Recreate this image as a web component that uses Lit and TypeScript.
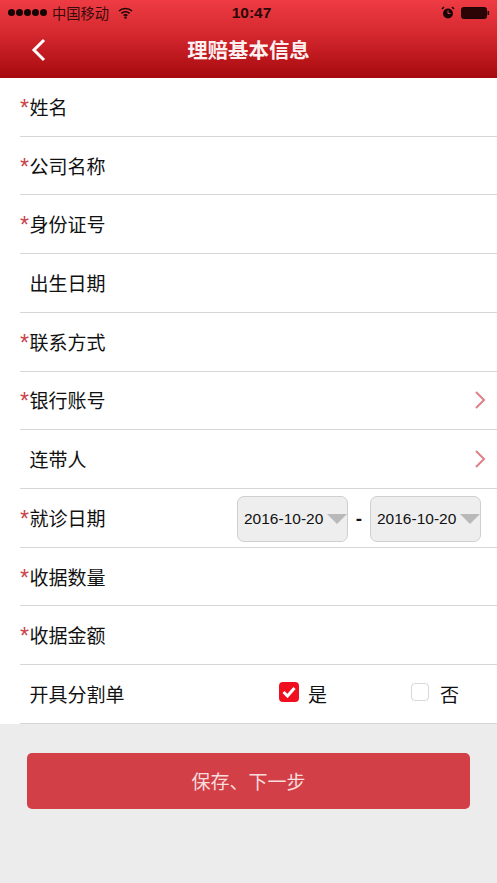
import { LitElement, html, css } from "lit";
import { customElement } from "lit/decorators.js";

const chevron = html`<svg class="chev" width="11" height="18" viewBox="0 0 11 18"><path d="M1 1 L9 9 L1 17" fill="none" stroke="#e07f87" stroke-width="2"/></svg>`;

@customElement("app-root")
export class AppRoot extends LitElement {
  static styles = css`
    :host { display: block; width: 497px; height: 883px; background: #ececec; overflow: hidden;
      font-family: "Liberation Sans", "Noto Sans CJK SC", sans-serif; color: #111; }
    .header { height: 78px; box-sizing: border-box; background: linear-gradient(#ef3c44 0%, #d4272e 45%, #a60a0e 100%);
      display: flex; flex-direction: column; }
    .status { height: 25px; display: flex; align-items: center; padding: 0 7px 0 8px; font-size: 14px; color: #1a0606; }
    .dots { display: flex; gap: 1px; margin-right: 5px; }
    .dots i { width: 7px; height: 7px; border-radius: 50%; background: #160404; }
    .carrier { font-size: 14.25px; color: #3a0c0c; }
    .wifi { margin-left: 9px; }
    .time { position: absolute; left: 0; width: 503px; text-align: center; font-size: 15.5px; font-weight: 700; pointer-events: none; color: #2a0808; }
    .sright { margin-left: auto; display: flex; align-items: center; gap: 6px; }
    .nav { flex: 1; display: flex; align-items: center; justify-content: center; position: relative; padding-bottom: 5px; }
    .back { position: absolute; left: 31px; top: 13px; }
    .title { color: #fdf0f0; font-size: 20.4px; font-weight: 700; }
    .form { background: #fff; padding-left: 20px; }
    .row { height: 58.73px; box-sizing: border-box; border-bottom: 1.5px solid #d6d6d6; display: flex; align-items: center;
      font-size: 19px; padding-right: 11px; padding-bottom: 1px; }
    .mark { width: 10px; color: #c9434c; font-size: 23px; line-height: 1; height: 19px; position: relative; top: 0; margin-right: -0.5px; }
    .spacer { flex: 1; }
    .dates { display: flex; align-items: center; margin: 3px 5px 0 0; }
    .select { width: 111px; height: 46px; box-sizing: border-box; border: 1px solid #cfcfcf; border-radius: 7px; background: #eeeeee;
      display: flex; align-items: center; padding-left: 6px; font-size: 15.5px; color: #111; position: relative; }
    .tri { position: absolute; right: 0; top: 17px; width: 0; height: 0; border-left: 10px solid transparent; border-right: 10px solid transparent; border-top: 10px solid #b9b9b9; }
    .dash { width: 22px; text-align: center; font-size: 19px; font-weight: 700; }
    .opt { display: flex; align-items: center; gap: 9px; font-size: 19px; }
    .opts { display: flex; gap: 84px; margin-right: 27px; }
    .opt:last-child { gap: 11px; }
    .box { width: 20px; height: 20px; box-sizing: border-box; border-radius: 4px; display: flex; align-items: center; justify-content: center; position: relative; top: -2px; }
    .on { background: #ef0f1e; }
    .off { background: #fff; border: 1.5px solid #d8d8d8; width: 18px; height: 18px; }
    .footer { padding: 29px 27px 0; }
    .btn { height: 56px; border-radius: 5px; background: #d33f47; color: #f7dcdd; font-size: 19px; display: flex; align-items: center; justify-content: center; }
  `;

  private field(label: string, req: boolean, end: unknown = null) {
    return html`<div class="row"><span class="mark">${req ? "*" : ""}</span><span>${label}</span><span class="spacer"></span>${end}</div>`;
  }

  private select() {
    return html`<div class="select">2016-10-20<span class="tri"></span></div>`;
  }

  render() {
    return html`
      <div class="header">
        <div class="status">
          <div class="dots"><i></i><i></i><i></i><i></i><i></i></div>
          <span class="carrier">中国移动</span>
          <svg class="wifi" width="15" height="12" viewBox="0 0 15 12"><path d="M1 4 A9.5 9.5 0 0 1 14 4 M3.4 6.4 A6 6 0 0 1 11.6 6.4 M5.6 8.6 A3 3 0 0 1 9.4 8.6" fill="none" stroke="#1a0606" stroke-width="1.6"/><circle cx="7.5" cy="10.6" r="1.2" fill="#1a0606"/></svg>
          <span class="time">10:47</span>
          <div class="sright">
            <svg width="14" height="14" viewBox="0 0 14 14"><circle cx="7" cy="7.5" r="5" fill="#1a0606"/><path d="M7 4.5 V7.5 H9.5" stroke="#d9474c" stroke-width="1" fill="none"/><path d="M1 3 L3 1 M13 3 L11 1" stroke="#1a0606" stroke-width="1.6"/></svg>
            <svg width="29" height="12" viewBox="0 0 29 12"><rect x="0.5" y="0.5" width="25" height="11" rx="2" fill="#2b0505" stroke="#1a0606"/><rect x="26.5" y="4" width="1.6" height="4" fill="#1a0606"/></svg>
          </div>
        </div>
        <div class="nav">
          <svg class="back" width="16" height="24" viewBox="0 0 16 24"><path d="M13 2 L3 12 L13 22" fill="none" stroke="#fff" stroke-width="3"/></svg>
          <span class="title">理赔基本信息</span>
        </div>
      </div>
      <div class="form">
        ${this.field("姓名", true)}
        ${this.field("公司名称", true)}
        ${this.field("身份证号", true)}
        ${this.field("出生日期", false)}
        ${this.field("联系方式", true)}
        ${this.field("银行账号", true, chevron)}
        ${this.field("连带人", false, chevron)}
        ${this.field("就诊日期", true, html`<div class="dates">${this.select()}<span class="dash">-</span>${this.select()}</div>`)}
        ${this.field("收据数量", true)}
        ${this.field("收据金额", true)}
        ${this.field("开具分割单", false, html`<div class="opts">
          <div class="opt"><span class="box on"><svg width="14" height="12" viewBox="0 0 14 12"><path d="M1.5 6 L5.5 10 L12.5 2" fill="none" stroke="#fff" stroke-width="3"/></svg></span>是</div>
          <div class="opt"><span class="box off"></span>否</div>
        </div>`)}
      </div>
      <div class="footer"><div class="btn">保存、下一步</div></div>
    `;
  }
}
